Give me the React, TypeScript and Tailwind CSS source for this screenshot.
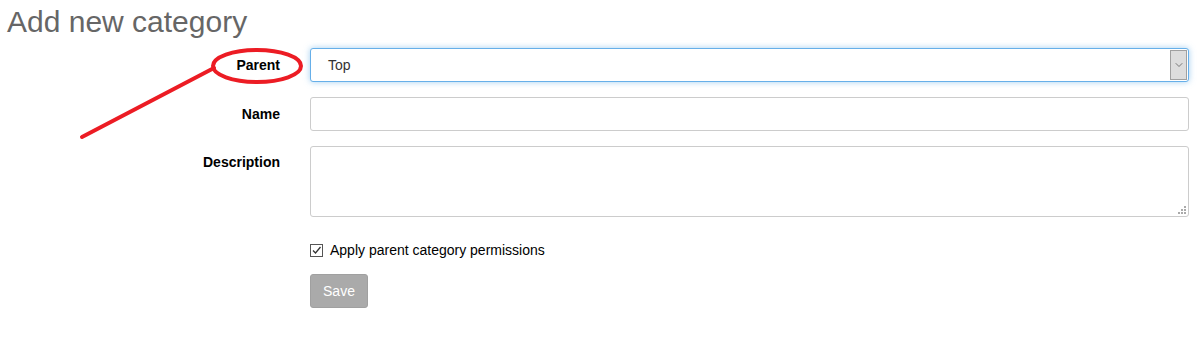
import { ChevronDown } from "lucide-react";

const font = { fontFamily: '"Liberation Sans", Arial, sans-serif' };

const Row = ({ label, children, top = false }: { label: string; children: React.ReactNode; top?: boolean }) => (
  <div className={`flex ${top ? "items-start" : "items-center"}`}>
    <label className={`w-[280px] shrink-0 text-right text-[14px] font-bold text-black ${top ? "pt-[6px]" : ""}`}>
      {label}
    </label>
    <div className="ml-[30px] w-[879px]">{children}</div>
  </div>
);

export default function App() {
  return (
    <div className="relative h-[351px] w-[1202px] bg-white" style={font}>
      <h1 className="pl-[7px] pt-[4px] text-[30px] leading-[36px] text-[#666666]">Add new category</h1>

      <div className="mt-[8px] flex flex-col gap-[15px]">
        <Row label="Parent">
          <div className="flex h-[34px] items-center rounded-[3px] border border-[#66afe9] bg-white shadow-[0_0_6px_rgba(102,175,233,0.6)]">
            <span className="flex-1 pl-[17px] text-[14px] text-[#333]">Top</span>
            <div className="mr-[1px] flex h-[30px] w-[17px] items-center justify-center border border-[#a0a0a0] bg-[#dddddd]">
              <ChevronDown className="h-[12px] w-[12px] text-[#555]" strokeWidth={1.5} />
            </div>
          </div>
        </Row>
        <Row label="Name">
          <div className="h-[34px] rounded-[3px] border border-[#cccccc] bg-white" />
        </Row>
        <Row label="Description" top>
          <div className="relative h-[71px] rounded-[3px] border border-[#cccccc] bg-white">
            <svg className="absolute bottom-[2px] right-[2px]" width="8" height="8" viewBox="0 0 8 8">
              <rect x="6" y="0" width="2" height="2" fill="#aaa" />
              <rect x="3" y="3" width="2" height="2" fill="#aaa" />
              <rect x="6" y="3" width="2" height="2" fill="#aaa" />
              <rect x="0" y="6" width="2" height="2" fill="#aaa" />
              <rect x="3" y="6" width="2" height="2" fill="#aaa" />
              <rect x="6" y="6" width="2" height="2" fill="#aaa" />
            </svg>
          </div>
        </Row>
      </div>

      <div className="ml-[310px] mt-[23px] flex h-[20px] items-center gap-[7px]">
        <div className="flex h-[13px] w-[13px] items-center justify-center border border-[#555] bg-white">
          <svg width="11" height="11" viewBox="0 0 11 11">
            <path d="M2 5.5 L4.5 8 L9.5 2" fill="none" stroke="#333" strokeWidth="1.3" />
          </svg>
        </div>
        <span className="text-[14px] leading-[20px] text-black">Apply parent category permissions</span>
      </div>

      <button className="ml-[310px] mt-[14px] h-[34px] w-[58px] rounded-[3px] border border-[#a0a0a0] bg-[#aaaaaa] text-[14px] text-white">
        Save
      </button>

      <svg className="pointer-events-none absolute left-0 top-0" width="1202" height="351">
        <ellipse cx="257" cy="66" rx="44" ry="16" fill="none" stroke="#ec1c24" strokeWidth="4" />
        <line x1="82" y1="137" x2="214" y2="68" stroke="#ec1c24" strokeWidth="4" strokeLinecap="round" />
      </svg>
    </div>
  );
}
